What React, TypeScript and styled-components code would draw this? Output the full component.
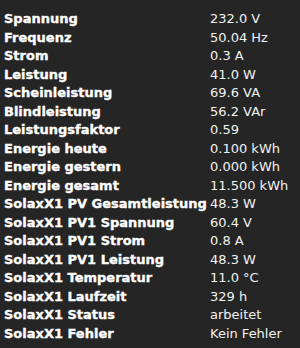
import styled, { createGlobalStyle } from "styled-components";

const ROWS: [string, string][] = [
  ["Spannung", "232.0 V"],
  ["Frequenz", "50.04 Hz"],
  ["Strom", "0.3 A"],
  ["Leistung", "41.0 W"],
  ["Scheinleistung", "69.6 VA"],
  ["Blindleistung", "56.2 VAr"],
  ["Leistungsfaktor", "0.59"],
  ["Energie heute", "0.100 kWh"],
  ["Energie gestern", "0.000 kWh"],
  ["Energie gesamt", "11.500 kWh"],
  ["SolaxX1 PV Gesamtleistung", "48.3 W"],
  ["SolaxX1 PV1 Spannung", "60.4 V"],
  ["SolaxX1 PV1 Strom", "0.8 A"],
  ["SolaxX1 PV1 Leistung", "48.3 W"],
  ["SolaxX1 Temperatur", "11.0 °C"],
  ["SolaxX1 Laufzeit", "329 h"],
  ["SolaxX1 Status", "arbeitet"],
  ["SolaxX1 Fehler", "Kein Fehler"],
];

const GlobalStyle = createGlobalStyle`
  html, body {
    margin: 0;
    padding: 0;
    background: #252525;
  }
  body {
    width: 300px;
    height: 348px;
    overflow: hidden;
  }
`;

const App = () => {
  return (
    <>
      <GlobalStyle />
      <Sensors>
        {ROWS.map(([label, value]) => (
          <Row key={label}>
            <Label>{label}</Label>
            <Value>{value}</Value>
          </Row>
        ))}
      </Sensors>
    </>
  );
};

export default App;

const Sensors = styled.div`
  display: grid;
  grid-template-columns: 206px 1fr;
  grid-auto-rows: 18.5px;
  padding: 9.5px 0 0 4px;
  font-family: "DejaVu Sans", Verdana, sans-serif;
  font-size: 13px;
`;

const Row = styled.div`
  display: contents;
`;

const Label = styled.div`
  display: flex;
  align-items: center;
  white-space: nowrap;
  color: #ffffff;
  font-weight: bold;
  -webkit-text-stroke: 0.35px #ffffff;
`;

const Value = styled.div`
  display: flex;
  align-items: center;
  white-space: nowrap;
  color: #f2f2f2;
`;
